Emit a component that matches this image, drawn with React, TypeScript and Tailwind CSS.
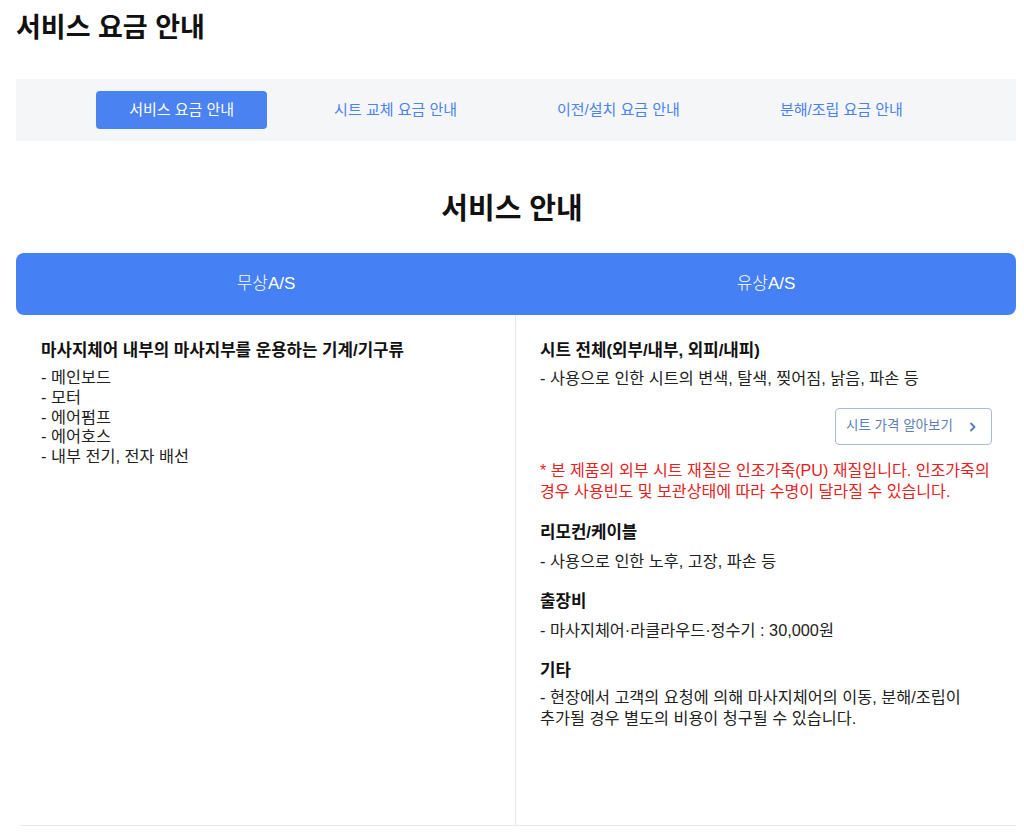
import React from "react";

const font = { fontFamily: '"Liberation Sans", "Noto Sans CJK KR", "Noto Sans", sans-serif' };

function Tab({ label, active }: { label: string; active?: boolean }) {
  return (
    <div
      className={
        "h-[38px] px-[33px] flex items-center rounded-[4px] text-[15px] leading-[20px] " +
        (active ? "bg-[#4a82f2] text-white" : "text-[#4a82f2]")
      }
    >
      {label}
    </div>
  );
}

function Heading({ children }: { children: React.ReactNode }) {
  return <div className="text-[16.8px] leading-[20px] font-bold text-[#111]">{children}</div>;
}

export default function App() {
  return (
    <div className="w-[1024px] min-h-[838px] bg-white text-[#111]" style={font}>
      <h1 className="px-4 pt-[10px] text-[27px] leading-[36px] font-bold text-[#111]">서비스 요금 안내</h1>

      <div className="ml-4 mr-2 mt-[33px] h-[62px] bg-[#f5f6f7] flex items-center justify-center gap-[34px]">
        <Tab label="서비스 요금 안내" active />
        <Tab label="시트 교체 요금 안내" />
        <Tab label="이전/설치 요금 안내" />
        <Tab label="분해/조립 요금 안내" />
      </div>

      <h2 className="mt-[48px] text-center text-[29px] leading-[40px] font-bold text-[#111]">서비스 안내</h2>

      <div className="ml-4 mr-2 mt-[24px] h-[62px] bg-[#4680f5] rounded-[8px] grid grid-cols-2 text-white text-[17px] font-light">
        <div className="flex items-center justify-center">무상A/S</div>
        <div className="flex items-center justify-center">유상A/S</div>
      </div>

      <div className="ml-5 mr-2 grid grid-cols-[496px_1fr] min-h-[511px] border-b border-[#e8e8e8]">
        <div className="border-r border-[#e8e8e8] pl-[21px] pr-6 pt-[26px]">
          <Heading>마사지체어 내부의 마사지부를 운용하는 기계/기구류</Heading>
          <p className="mt-[7px] text-[16.3px] leading-[19.75px] text-[#222]">
            - 메인보드
            <br />
            - 모터
            <br />
            - 에어펌프
            <br />
            - 에어호스
            <br />
            - 내부 전기, 전자 배선
          </p>
        </div>

        <div className="pl-[24px] pr-[24px] pt-[26px]">
          <Heading>시트 전체(외부/내부, 외피/내피)</Heading>
          <p className="mt-[7px] text-[16.3px] leading-[20px] text-[#222]">- 사용으로 인한 시트의 변색, 탈색, 찢어짐, 낡음, 파손 등</p>

          <div className="mt-[20px] flex justify-end">
            <button className="w-[157px] h-[37px] border border-[#a9bcd8] rounded-[4px] text-[13.5px] text-[#5d7fb8] flex items-center pl-[10px] gap-[15px] bg-white">
              <span>시트 가격 알아보기</span>
              <svg width="9" height="10" viewBox="0 0 9 10" fill="none">
                <path d="M3 1.5 L6.5 5 L3 8.5" stroke="#5d7fb8" strokeWidth="2" strokeLinecap="round" strokeLinejoin="round" />
              </svg>
            </button>
          </div>

          <p className="mt-[15px] text-[16.1px] leading-[21px] text-[#e52222] whitespace-nowrap">
            * 본 제품의 외부 시트 재질은 인조가죽(PU) 재질입니다. 인조가죽의
            <br />
            경우 사용빈도 및 보관상태에 따라 수명이 달라질 수 있습니다.
          </p>

          <div className="mt-[21px]">
            <Heading>리모컨/케이블</Heading>
            <p className="mt-2 text-[16.3px] leading-[20px] text-[#222]">- 사용으로 인한 노후, 고장, 파손 등</p>
          </div>

          <div className="mt-[21px]">
            <Heading>출장비</Heading>
            <p className="mt-2 text-[16.3px] leading-[20px] text-[#222]">- 마사지체어·라클라우드·정수기 : 30,000원</p>
          </div>

          <div className="mt-[21px]">
            <Heading>기타</Heading>
            <p className="mt-[6px] text-[16.3px] leading-[21px] text-[#222] whitespace-nowrap">
              - 현장에서 고객의 요청에 의해 마사지체어의 이동, 분해/조립이
              <br />
              추가될 경우 별도의 비용이 청구될 수 있습니다.
            </p>
          </div>
        </div>
      </div>
    </div>
  );
}
